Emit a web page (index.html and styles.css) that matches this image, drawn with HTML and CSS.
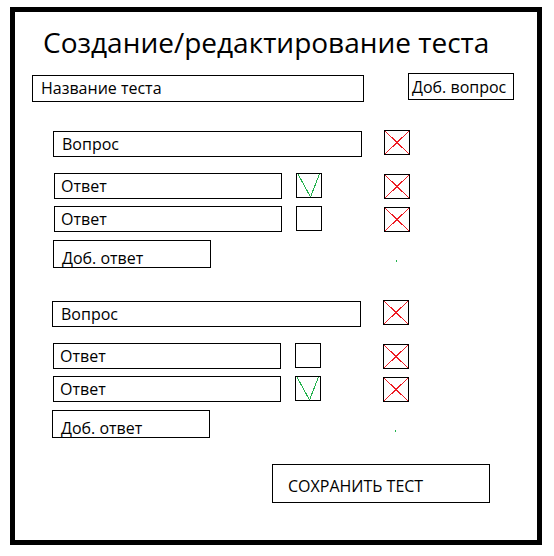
FILE: index.html
```html
<!DOCTYPE html>
<html lang="ru">
<head>
  <meta charset="UTF-8">
  <title>Создание/редактирование теста</title>
  <meta name="viewport" content="width=device-width, initial-scale=1.0">
  <link rel="stylesheet" href="styles.css">
</head>
<body>
<div class="frame">

  <h1 class="title">Создание/редактирование теста</h1>

  <!-- Название + добавить вопрос -->
  <div class="top-row">
    <div class="field field-name">Название теста</div>
    <div class="btn btn-add-q">Доб. вопрос</div>
  </div>

  <!-- Вопрос 1 -->
  <section class="q-block">
    <div class="q-row">
      <div class="field field-q">Вопрос</div>
      <span class="del"><svg viewBox="0 0 24 23"><path d="M0 0L24 23M24 0L0 23"/></svg></span>
    </div>
    <div class="a-row">
      <div class="field field-a">Ответ</div>
      <span class="check"><svg viewBox="0 0 24 23"><path d="M1 0L13.5 23L22.5 0"/></svg></span>
      <span class="del"><svg viewBox="0 0 24 23"><path d="M0 0L24 23M24 0L0 23"/></svg></span>
    </div>
    <div class="a-row">
      <div class="field field-a">Ответ</div>
      <span class="check"></span>
      <span class="del"><svg viewBox="0 0 24 23"><path d="M0 0L24 23M24 0L0 23"/></svg></span>
    </div>
    <div class="add-row">
      <div class="btn btn-add-a">Доб. ответ</div>
      <span class="dot"></span>
    </div>
  </section>

  <!-- Вопрос 2 -->
  <section class="q-block">
    <div class="q-row">
      <div class="field field-q">Вопрос</div>
      <span class="del"><svg viewBox="0 0 24 23"><path d="M0 0L24 23M24 0L0 23"/></svg></span>
    </div>
    <div class="a-row">
      <div class="field field-a">Ответ</div>
      <span class="check"></span>
      <span class="del"><svg viewBox="0 0 24 23"><path d="M0 0L24 23M24 0L0 23"/></svg></span>
    </div>
    <div class="a-row">
      <div class="field field-a">Ответ</div>
      <span class="check"><svg viewBox="0 0 24 23"><path d="M1 0L13.5 23L22.5 0"/></svg></span>
      <span class="del"><svg viewBox="0 0 24 23"><path d="M0 0L24 23M24 0L0 23"/></svg></span>
    </div>
    <div class="add-row">
      <div class="btn btn-add-a">Доб. ответ</div>
      <span class="dot"></span>
    </div>
  </section>

  <div class="btn btn-save">СОХРАНИТЬ ТЕСТ</div>

</div>
</body>
</html>
```

FILE: styles.css
```css
* {
  box-sizing: border-box;
}

body {
  margin: 0;
  background: #fff;
  color: #000;
  font-family: "Open Sans", "Noto Sans", sans-serif;
}

.frame {
  width: 532px;
  height: 538px;
  margin: 7px 0 0 10px;
  border: 5px solid #000;
}

.title {
  margin: 13px 0 14px;
  padding-left: 28px;
  font-size: 28px;
  line-height: 34px;
  font-weight: normal;
}

.top-row {
  display: flex;
  align-items: flex-start;
  padding-left: 17px;
}

.field,
.btn {
  border: 1px solid #000;
  font-size: 16px;
  white-space: nowrap;
  overflow: hidden;
}

.field-name {
  width: 332px;
  height: 27px;
  margin-top: 2px;
  padding-left: 8px;
  line-height: 25px;
}

.btn-add-q {
  width: 106px;
  height: 27px;
  margin-left: 44px;
  padding: 1px 0 0 3px;
  line-height: 24px;
}

/* блоки вопросов */
.q-block {
  margin: 28px 0 0 38px;
}

.q-block + .q-block {
  margin: 32px 0 0 37px;
}

.q-row,
.a-row,
.add-row {
  display: flex;
  align-items: flex-start;
}

.field-q {
  width: 309px;
  height: 26px;
  margin-top: 1px;
  padding-left: 8px;
  line-height: 24px;
}

.del,
.check {
  display: block;
  width: 26px;
  height: 25px;
  border: 1px solid #000;
}

.del {
  margin-left: 22px;
}

.del svg,
.check svg {
  display: block;
  width: 24px;
  height: 23px;
  fill: none;
  stroke-width: 1;
  shape-rendering: crispEdges;
}

.del svg {
  stroke: #ed1c24;
}

.check svg {
  stroke: #22b14c;
}

.a-row {
  margin: 16px 0 0 1px;
}

.a-row + .a-row {
  margin-top: 7px;
}

.field-a {
  width: 228px;
  height: 26px;
  padding-left: 6px;
  line-height: 24px;
}

.a-row .check {
  margin-left: 14px;
}

.a-row .del {
  margin: 1px 0 0 62px;
}

.add-row {
  margin-top: 8px;
}

.btn-add-a {
  width: 158px;
  height: 28px;
  padding: 8px 0 0 8px;
  line-height: 18px;
}

.dot {
  width: 1px;
  height: 2px;
  margin: 20px 0 0 185px;
  background: #22b14c;
}

.btn-save {
  width: 218px;
  height: 39px;
  margin: 26px 0 0 257px;
  padding: 6px 0 0 15px;
  line-height: 31px;
}
```
